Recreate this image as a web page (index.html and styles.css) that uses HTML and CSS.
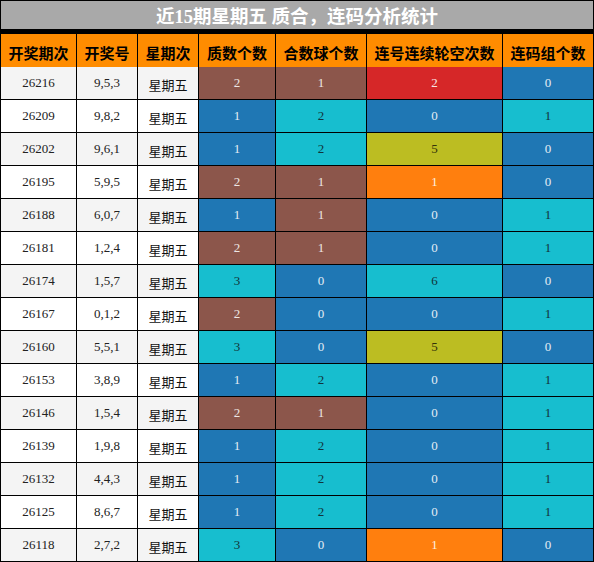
FILE: index.html
```html
<!DOCTYPE html>
<html lang="zh-CN">
<head>
  <meta charset="UTF-8" />
  <meta name="viewport" content="width=device-width, initial-scale=1.0"/>
  <title>近15期星期五 质合，连码分析统计</title>
  <link rel="stylesheet" href="styles.css">
</head>
<body>

  <div class="board" id="board">
    <div class="title">近15期星期五 质合，连码分析统计</div>
    <div class="head">开奖期次</div>
    <div class="head">开奖号</div>
    <div class="head">星期次</div>
    <div class="head">质数个数</div>
    <div class="head">合数球个数</div>
    <div class="head">连号连续轮空次数</div>
    <div class="head">连码组个数</div>
  </div>

  <script>
    const rows = [
      ['26216', '9,5,3', 2, 1, 2, 0],
      ['26209', '9,8,2', 1, 2, 0, 1],
      ['26202', '9,6,1', 1, 2, 5, 0],
      ['26195', '5,9,5', 2, 1, 1, 0],
      ['26188', '6,0,7', 1, 1, 0, 1],
      ['26181', '1,2,4', 2, 1, 0, 1],
      ['26174', '1,5,7', 3, 0, 6, 0],
      ['26167', '0,1,2', 2, 0, 0, 1],
      ['26160', '5,5,1', 3, 0, 5, 0],
      ['26153', '3,8,9', 1, 2, 0, 1],
      ['26146', '1,5,4', 2, 1, 0, 1],
      ['26139', '1,9,8', 1, 2, 0, 1],
      ['26132', '4,4,3', 1, 2, 0, 1],
      ['26125', '8,6,7', 1, 2, 0, 1],
      ['26118', '2,7,2', 3, 0, 1, 0]
    ];

    // цвет ячейки по значению, для каждого столбца свой
    const colors = [
      { 1: 'blue', 2: 'brown', 3: 'cyan' },
      { 0: 'blue', 1: 'brown', 2: 'cyan' },
      { 0: 'blue', 1: 'orange', 2: 'red', 5: 'olive', 6: 'cyan' },
      { 0: 'blue', 1: 'cyan' }
    ];

    const board = document.getElementById('board');
    let html = '';

    rows.forEach(function(r, i) {
      const bg = i % 2 === 0 ? 'odd' : 'even';
      html += `<div class="cell num ${bg}">${r[0]}</div>`;
      html += `<div class="cell num ${bg}">${r[1]}</div>`;
      html += `<div class="cell day ${bg}">星期五</div>`;
      for (let c = 0; c < 4; c++) {
        const v = r[c + 2];
        html += `<div class="cell num ${colors[c][v]}">${v}</div>`;
      }
    });

    board.insertAdjacentHTML('beforeend', html);
  </script>
</body>
</html>
```

FILE: styles.css
```css
* { box-sizing: border-box; }

body {
  margin: 0;
  background: #fff;
  font-family: 'Liberation Serif', 'Noto Sans CJK SC', serif;
}

.board {
  display: grid;
  grid-template-columns: 75px 60px 60px 76px 90px 135px 90px;
  grid-auto-rows: 32px;
  gap: 1px;
  padding: 1px;
  width: 594px;
  background: #000;
}

.title {
  grid-column: 1 / -1;
  height: 28px;
  background: #a9a9a9;
  color: #fff;
  font-size: 18.5px;
  font-weight: bold;
  display: flex;
  align-items: center;
  justify-content: center;
}

.head {
  height: 36px;
  background: #ff8c00;
  color: #000;
  font-size: 15px;
  font-weight: bold;
  display: flex;
  align-items: center;
  justify-content: center;
  white-space: nowrap;
}

.cell {
  display: flex;
  align-items: center;
  justify-content: center;
  font-size: 13px;
  color: #222;
}

.day {
  font-size: 13px;
  padding-top: 2px;
  color: #111;
}

.odd { background: #f4f4f4; }
.even { background: #fff; }

.blue { background: #1f77b4; color: #e4edf5; }
.brown { background: #8c564b; color: #eee6e4; }
.cyan { background: #17becf; color: #12343a; }
.red { background: #d62728; color: #f8e4e4; }
.olive { background: #bcbd22; color: #34340a; }
.orange { background: #ff7f0e; color: #fdeede; }
```
